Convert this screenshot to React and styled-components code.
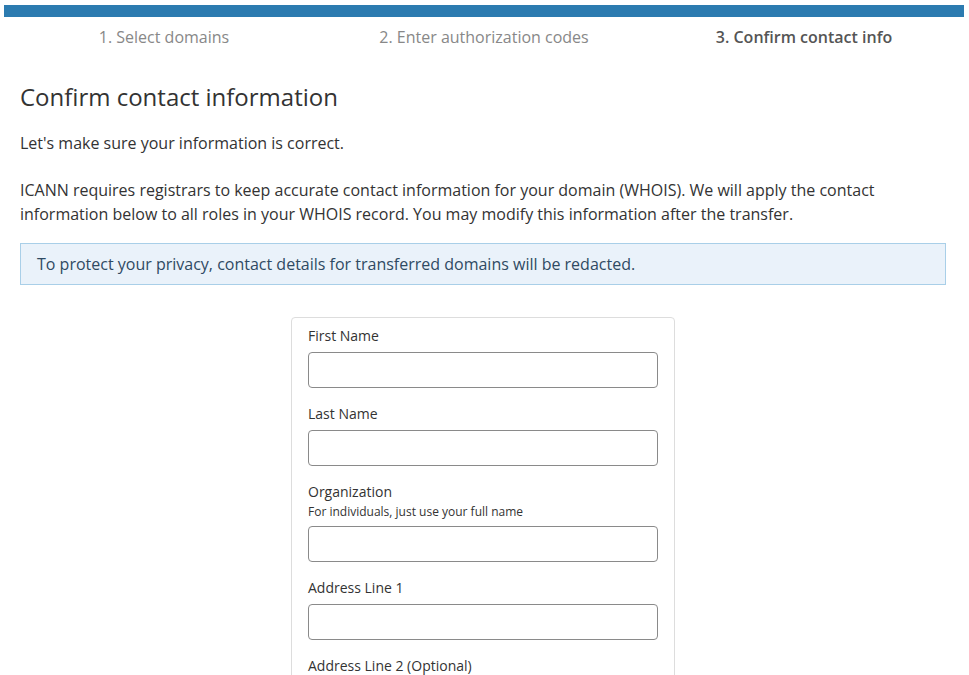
import styled, { createGlobalStyle } from "styled-components";

const GlobalStyle = createGlobalStyle`
  body {
    margin: 0;
    background: #ffffff;
    font-family: "Open Sans", "Noto Sans", sans-serif;
    color: #333333;
  }
`;

const steps = [
  { label: "1. Select domains" },
  { label: "2. Enter authorization codes" },
  { label: "3. Confirm contact info", active: true },
];

const fields = [
  { label: "First Name" },
  { label: "Last Name" },
  { label: "Organization", hint: "For individuals, just use your full name" },
  { label: "Address Line 1" },
  { label: "Address Line 2 (Optional)" },
];

function App() {
  return (
    <Page>
      <GlobalStyle />
      <ProgressBar />
      <StepRow>
        {steps.map((s) => (
          <Step key={s.label} $active={s.active}>
            {s.label}
          </Step>
        ))}
      </StepRow>
      <Content>
        <Title>Confirm contact information</Title>
        <Paragraph $gap={23}>Let's make sure your information is correct.</Paragraph>
        <Paragraph $gap={17}>
          ICANN requires registrars to keep accurate contact information for
          your domain (WHOIS). We will apply the contact information below to
          all roles in your WHOIS record. You may modify this information after
          the transfer.
        </Paragraph>
        <Notice>
          To protect your privacy, contact details for transferred domains will
          be redacted.
        </Notice>
        <FormCard>
          {fields.map((f) => (
            <Field key={f.label}>
              <Label>{f.label}</Label>
              {f.hint && <Hint>{f.hint}</Hint>}
              <Input type="text" />
            </Field>
          ))}
        </FormCard>
      </Content>
    </Page>
  );
}

export default App;

const Page = styled.div`
  width: 960px;
  margin: 0 0 0 4px;
  padding-top: 5px;
  height: 670px;
  overflow: hidden;
`;
const ProgressBar = styled.div`
  height: 12px;
  background: #2c7bb0;
`;
const StepRow = styled.div`
  display: grid;
  grid-template-columns: repeat(3, 1fr);
  padding-top: 9px;
`;
const Step = styled.div`
  text-align: center;
  font-size: 16px;
  line-height: 22px;
  font-weight: ${(p) => (p.$active ? 600 : 400)};
  color: ${(p) => (p.$active ? "#555555" : "#888888")};
`;
const Content = styled.div`
  padding: 0 18px 0 16px;
`;
const Title = styled.h1`
  margin: 33px 0 18px;
  font-size: 24px;
  font-weight: 400;
  line-height: 32px;
  color: #333333;
`;
const Paragraph = styled.p`
  margin: 0 0 ${(p) => p.$gap}px;
  font-size: 16px;
  line-height: 24px;
  color: #333333;
`;
const Notice = styled.div`
  margin: 0 0 32px;
  padding: 8px 16px;
  background: #eaf2fa;
  border: 1px solid #a9cfe8;
  font-size: 16px;
  line-height: 24px;
  color: #2f4a63;
`;
const FormCard = styled.div`
  width: 350px;
  margin: 0 auto;
  padding: 8px 16px 16px;
  border: 1px solid #dddddd;
  border-radius: 4px;
  display: flex;
  flex-direction: column;
  gap: 16px;
`;
const Field = styled.div`
  display: flex;
  flex-direction: column;
`;
const Label = styled.label`
  font-size: 14px;
  line-height: 20px;
  color: #333333;
  margin-bottom: 6px;
`;
const Hint = styled.div`
  font-size: 12px;
  line-height: 16px;
  color: #333333;
  margin: -4px 0 6px;
`;
const Input = styled.input`
  box-sizing: border-box;
  height: 36px;
  width: 100%;
  border: 1px solid #8a8a8a;
  border-radius: 4px;
  padding: 6px 10px;
  font-size: 14px;
  font-family: inherit;
`;
